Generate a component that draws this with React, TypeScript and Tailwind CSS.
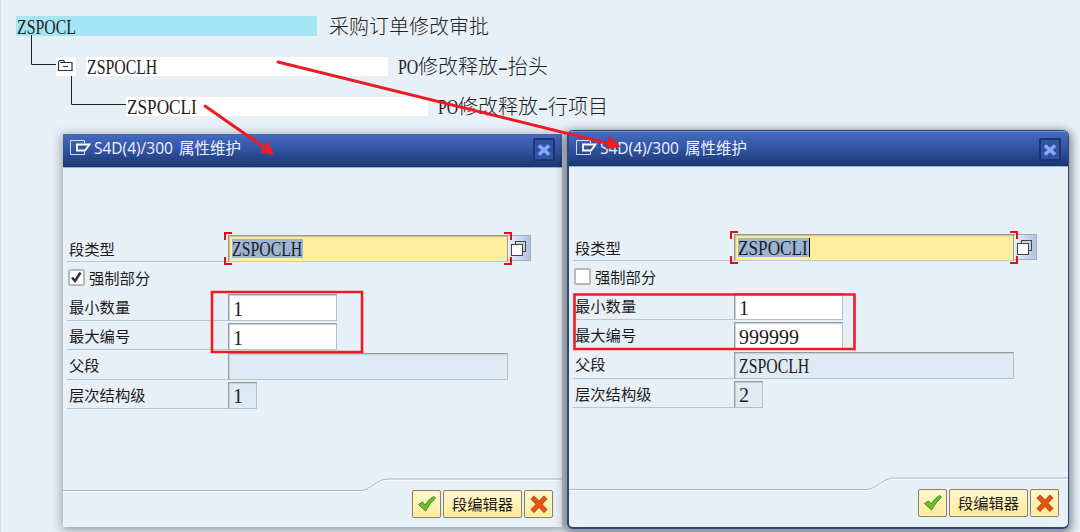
import { clsx } from 'clsx';
import type { ReactNode } from 'react';

const SERIF = "font-['Liberation_Serif','Noto_Sans_CJK_SC',serif]";
const SANS = "font-['Open_Sans','Noto_Sans_CJK_SC',sans-serif]";

type Segment = {
  type: string;
  required: boolean;
  min: string;
  max: string;
  parent: string;
  level: string;
};

const HEADER_SEGMENT: Segment = { type: 'ZSPOCLH', required: true, min: '1', max: '1', parent: '', level: '1' };
const ITEM_SEGMENT: Segment = { type: 'ZSPOCLI', required: false, min: '1', max: '999999', parent: 'ZSPOCLH', level: '2' };

// Narrow serif capitals, squeezed to a ten pixel cell
function Code({ text, width }: { text: string; width: string }) {
  return (
    <span className={clsx('inline-block whitespace-nowrap', width)}>
      <span className={clsx('inline-block origin-left text-[20px] leading-5', text.endsWith('I') ? 'scale-x-[.86]' : 'scale-x-[.79]')}>
        {text}
      </span>
    </span>
  );
}

function FolderIcon() {
  return (
    <svg width="20" height="20" viewBox="0 0 20 20" fill="none" stroke="#333" strokeWidth="1.2">
      <path d="M2.5 13.5v-8.500l1-1.500h4l1.500 2h7v8z" />
      <path d="M4 5.500h5M7 9.500h5" />
    </svg>
  );
}

function Hyphen() {
  return <span className="inline-block w-2.5 scale-x-150 text-center">-</span>;
}

function SegmentTree() {
  return (
    <div className={clsx('flex flex-col gap-5 pt-4 text-[20px] leading-5 text-[#222]', SERIF)}>
      <div className="flex h-5 items-center pl-4">
        <div className="flex h-5 w-[301px] items-center bg-[#a6e5f3] pt-0.5 pl-px">
          <Code text="ZSPOCL" width="w-[60px]" />
        </div>
        <span className="ml-3 pt-0.5 font-light">采购订单修改审批</span>
      </div>
      <div className="flex h-5 items-center pl-14">
        <div className="h-[19px] w-5 bg-white">
          <FolderIcon />
        </div>
        <div className="ml-2.5 flex h-[19px] w-[302px] items-center bg-white pt-0.5 pl-px">
          <Code text="ZSPOCLH" width="w-[70px]" />
        </div>
        <span className="ml-2.5 flex pt-0.5 font-light">
          <Code text="PO" width="w-[20px]" />
          修改释放<Hyphen />抬头
        </span>
      </div>
      <div className="flex h-5 items-center pl-[126px]">
        <div className="flex h-[19px] w-[302px] items-center bg-white pt-0.5 pl-px">
          <Code text="ZSPOCLI" width="w-[70px]" />
        </div>
        <span className="ml-2.5 flex pt-0.5 font-light">
          <Code text="PO" width="w-[20px]" />
          修改释放<Hyphen />行项目
        </span>
      </div>
      <svg className="absolute top-0 -left-px" width="140" height="120" fill="none" stroke="#222">
        <path d="M31.500 35v29.500H56M71.500 76v28.500H126" />
      </svg>
    </div>
  );
}

function TitleBar({ active }: { active: boolean }) {
  return (
    <div
      className={clsx(
        'flex shrink-0 items-start border-b border-[#9fafcd] bg-linear-to-b from-[#456bc0] via-[#3153a1] to-[#1b3671]',
        active ? 'h-9 border-t border-t-[#6f91d6] pt-0.5' : 'h-[34px]'
      )}
    >
      <svg className="mt-1.5 ml-[7px] shrink-0" width="21" height="16" fill="none" stroke="#fff">
        <path d="M14.500 3V.5H.5v14h14V12" strokeOpacity=".8" />
        <path d="M7 4.500h12.500l-4.500 6H7z" strokeWidth="1.800" />
      </svg>
      <span className="mt-1 ml-[3px] flex gap-1.5 text-[15.5px] leading-5 text-[#edf2ff]">
        <span>S4D(4)/300</span>
        <span>属性维护</span>
      </span>
      <div
        className={clsx(
          'mt-1 ml-auto flex h-[23px] w-[22px] items-center justify-center rounded-xs border-2 border-[#1a3575] bg-[#3253a0]',
          active ? 'mr-[7px]' : 'mr-[7px]'
        )}
      >
        <svg width="12" height="12" fill="none" stroke="#85abff" strokeWidth="3.400">
          <path d="M1 1.500l10 9M11 1.500l-10 9" />
        </svg>
      </div>
    </div>
  );
}

function Row({ label, className, children }: { label: string; className?: string; children: ReactNode }) {
  return (
    <div className={clsx('flex shrink-0 items-end', className ?? 'h-[29.2px]')}>
      <div className="ml-1 flex h-full w-[161px] shrink-0 items-center border-b border-[#bec4c8] pt-0.5 pl-0.5">{label}</div>
      {children}
    </div>
  );
}

function Field({ value, width, readOnly }: { value: string; width: string; readOnly?: boolean }) {
  const numeric = /^\d/.test(value);
  return (
    <div
      className={clsx(
        'flex h-[27px] items-center border border-t-[#989da1] border-r-[#babfc4] border-b-[#babfc4] border-l-[#989da1] pt-0.5 pl-1 text-[20px] leading-5 shadow-[inset_1px_1px_1px_#c9ccce]',
        SERIF,
        width,
        readOnly ? 'bg-[#deeaf4]' : 'bg-white'
      )}
    >
      {numeric ? value : <Code text={value} width="w-[70px]" />}
    </div>
  );
}

function FocusedField({ value, caret }: { value: string; caret: boolean }) {
  return (
    <div className="relative flex">
      <div className={clsx('flex h-[27px] w-[280px] items-center border border-[#999b98] border-b-[#c4c8cb] bg-[#ffee9e] pl-[3px] shadow-[inset_1px_1px_1px_#c8bd82]', SERIF)}>
        <span className={clsx('flex h-[19px] items-center bg-[#9bb5d3] pt-0.5', caret && 'border-r border-black')}>
          <Code text={value} width="w-[71px]" />
        </span>
      </div>
      <div className="h-[26px] w-[23px] border border-l-0 border-[#a4acb8] bg-linear-to-r from-[#e8f0fb] to-[#afc4e4] pt-1 pl-0.5">
        <svg width="17" height="17" stroke="#444" strokeWidth="1.100">
          <path d="M5.500 1.500h10v10h-10z" fill="#ccd8df" />
          <path d="M1.500 4.500h11v11h-11z" fill="#fff" />
        </svg>
      </div>
      <svg className="absolute -top-[3px] -left-1" width="292" height="34" fill="none" stroke="#e60d12" strokeWidth="2">
        <path d="M8 1H1v7M280 1h7v7M8 32H1v-7M280 32h7v-7" />
      </svg>
    </div>
  );
}

function ToolButton({ width, children }: { width: string; children: ReactNode }) {
  return (
    <button
      className={clsx(
        'flex h-7 items-center justify-center rounded-xs border border-[#88805f] bg-linear-to-b from-[#fff8d3] to-[#ffe996] shadow-[inset_0_0_0_1px_#fff2bd]',
        width
      )}
    >
      {children}
    </button>
  );
}

function Footer() {
  return (
    <div className="relative mt-auto h-[49px] shrink-0">
      <svg className="absolute top-0 left-0" width="500" height="16" fill="none">
        <path d="M0 13.500h298c9 0 16-11.500 27-11.500h175" stroke="#fff" />
        <path d="M0 12.500h298c9 0 16-11.500 27-11.500h175" stroke="#a9b7c6" />
      </svg>
      <div className="relative flex justify-end gap-0.5 pt-3 pr-[9px]">
        <ToolButton width="w-[29px]">
          <svg width="20" height="18">
            <path d="M1.500 9.500l4-2.500 2.500 3Q12 4 16.500 1.500l2 1.500Q13 8 8.500 16z" fill="#6cc024" stroke="#488536" strokeWidth="1" />
          </svg>
        </ToolButton>
        <ToolButton width="w-[79px]">段编辑器</ToolButton>
        <ToolButton width="w-[29px]">
          <svg width="18" height="18" fill="none" strokeLinecap="square">
            <path d="M4 4l10 10.500M14 4L4 14.500" stroke="#b44716" strokeWidth="5" />
            <path d="M4 4l10 10.500M14 4L4 14.500" stroke="#e25514" strokeWidth="3.400" />
          </svg>
        </ToolButton>
      </div>
    </div>
  );
}

function PropertyDialog({ segment, active }: { segment: Segment; active: boolean }) {
  return (
    <div
      className={clsx(
        'absolute flex flex-col overflow-hidden bg-[#e8f0f7] text-[15.3px] leading-5 text-[#1c1c1c]',
        SANS,
        active
          ? 'top-[130px] left-[567px] h-[399px] w-[502px] rounded-md border border-b-2 border-l-2 border-[#2b477f] pb-px shadow-[0_3px_9px_3px_rgba(0,0,0,.42)]'
          : 'top-[134px] left-[63px] h-[393px] w-[499px] shadow-[0_2px_10px_1px_rgba(0,0,0,.36)]'
      )}
    >
      <TitleBar active={active} />
      <Row label="段类型" className="mt-[67px] h-[27px]">
        <FocusedField value={segment.type} caret={active} />
      </Row>
      <div className="flex h-[30px] shrink-0 items-center pt-px pl-[5px]">
        <div className="flex size-[17px] items-center justify-center rounded-xs border-2 border-[#b6b9bc] bg-white">
          {segment.required && (
            <svg width="13" height="13" fill="none" stroke="#2b2b45" strokeWidth="2.500">
              <path d="M2 6.500l3 3.500 5.500-8.500" />
            </svg>
          )}
        </div>
        <span className="ml-1">强制部分</span>
      </div>
      <Row label="最小数量">
        <Field value={segment.min} width="w-[109px]" />
      </Row>
      <Row label="最大编号">
        <Field value={segment.max} width="w-[109px]" />
      </Row>
      <Row label="父段">
        <Field value={segment.parent} width="w-[280px]" readOnly />
      </Row>
      <Row label="层次结构级">
        <Field value={segment.level} width="w-[29px]" readOnly />
      </Row>
      <Footer />
    </div>
  );
}

function Annotations() {
  return (
    <svg className="absolute inset-0" width="1080" height="532" fill="none" stroke="#ed1c24">
      <g strokeWidth="3" strokeLinecap="round">
        <path d="M205 106l60 42M278 62l332 82" />
      </g>
      <path d="M274 155l-14-2.500 8-11.500zM621 147l-15 2 3.500-13.500z" fill="#ed1c24" stroke="none" />
      <g strokeWidth="2.600">
        <path d="M212 292h150v60H212zM574.500 294.500h280v54.500h-280z" />
      </g>
    </svg>
  );
}

export default function App() {
  return (
    <main className="relative h-[532px] w-[1080px] overflow-hidden border-l border-[#d5dbe9] bg-[#e8f0f7]">
      <div className="-ml-px">
        <SegmentTree />
      </div>
      <div className="absolute inset-y-0 -left-px w-[1080px]">
        <PropertyDialog segment={HEADER_SEGMENT} active={false} />
        <PropertyDialog segment={ITEM_SEGMENT} active />
        <Annotations />
      </div>
    </main>
  );
}
